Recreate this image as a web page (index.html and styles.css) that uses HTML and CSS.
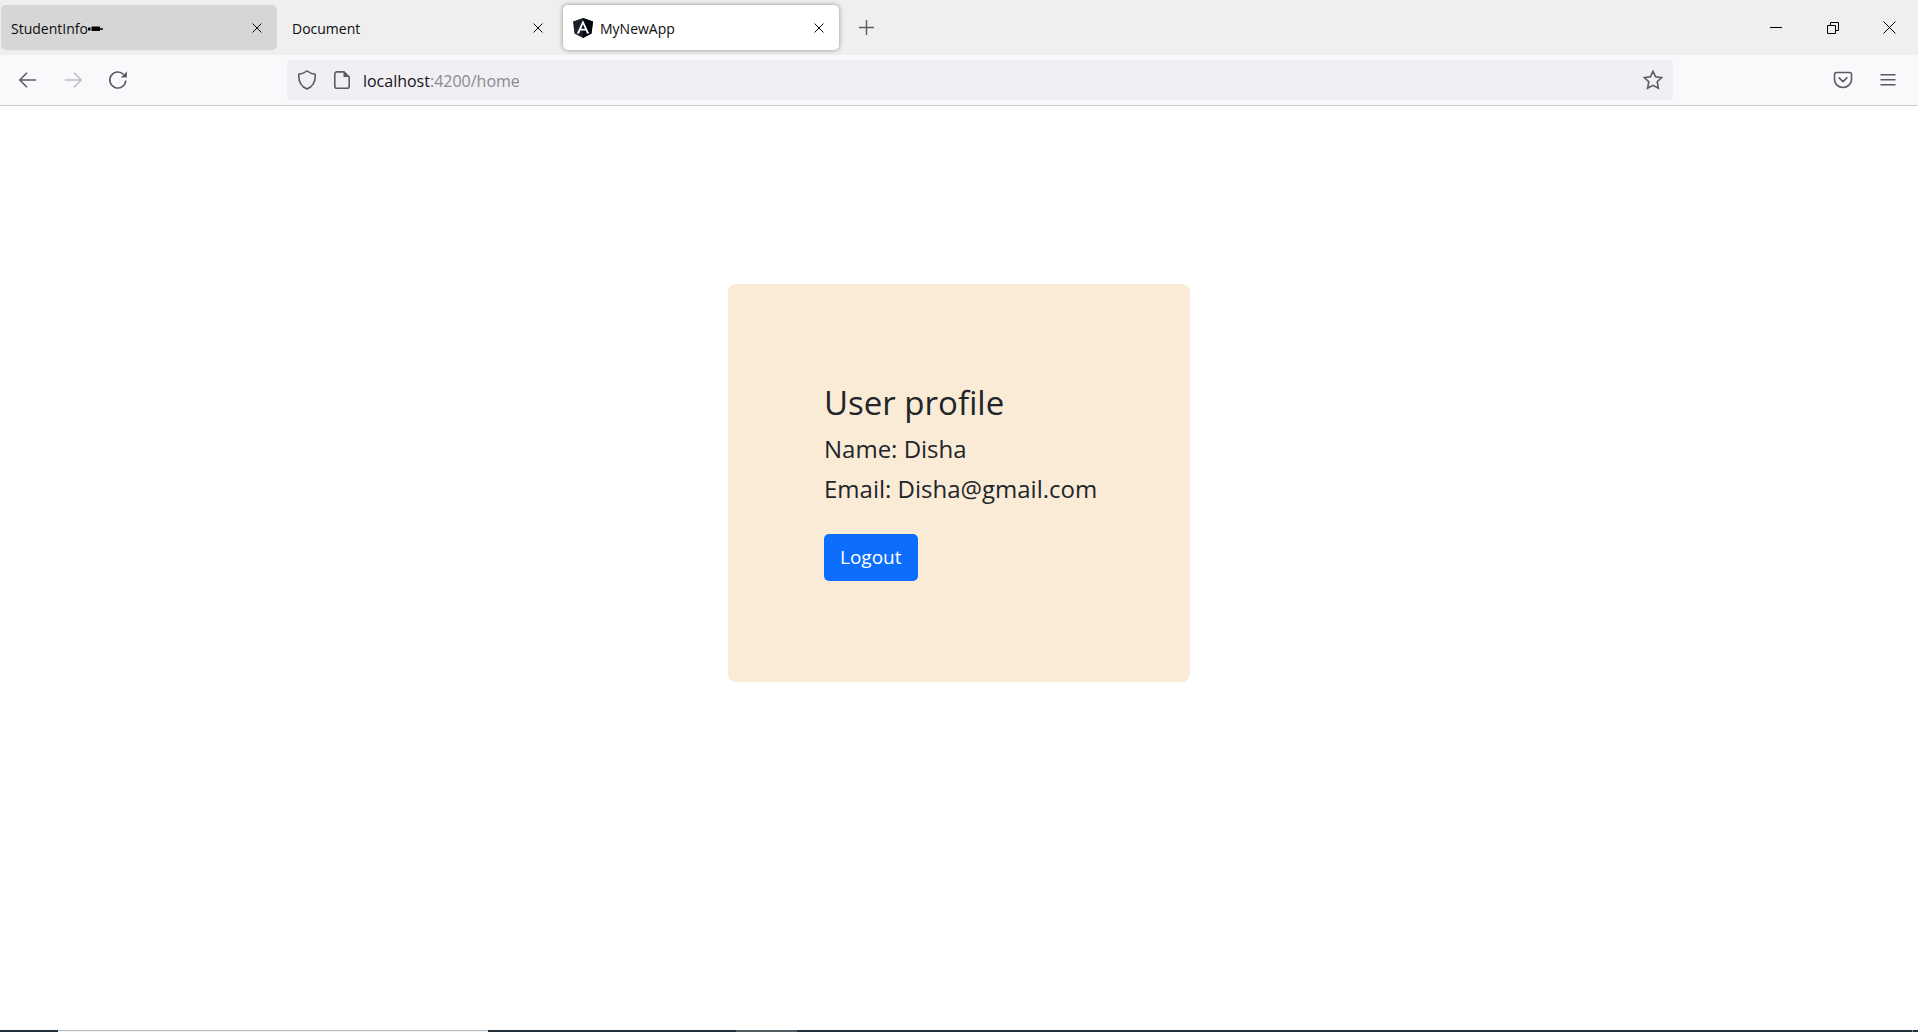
FILE: index.html
```html
<!DOCTYPE html>
<html lang="en">
<head>
<meta charset="utf-8">
<title>MyNewApp</title>
<link rel="stylesheet" href="styles.css">
</head>
<body>
<header class="browser">
  <div class="tab-strip">
    <div class="tab tab-hover">
      <span class="tab-title">StudentInfo</span>
      <svg class="mark" width="15" height="6" viewBox="0 0 15 6" aria-hidden="true"><path d="M3.500.600H12V5H3.500zM0 1.500H2.500V4.500H0zM12 2.200H15V3.700H12z"/></svg>
      <button class="tab-close" aria-label="Close StudentInfo"><svg width="10" height="10" viewBox="0 0 10 10"><path d="M.5.5l9 9M9.500.5l-9 9"/></svg></button>
    </div>
    <div class="tab">
      <span class="tab-title">Document</span>
      <button class="tab-close" aria-label="Close Document"><svg width="10" height="10" viewBox="0 0 10 10"><path d="M.5.5l9 9M9.500.5l-9 9"/></svg></button>
    </div>
    <div class="tab tab-active">
      <svg class="favicon" width="20" height="20" viewBox="0 0 20 20" aria-hidden="true"><path fill="#1b1f2b" d="M10 0l10 3.400-1.500 12L10 20l-8.500-4.600L0 3.400z"/><path fill="#03060f" d="M10 0l10 3.400-1.500 12L10 20z"/><path fill="#fff" fill-rule="evenodd" d="M10 2.200l6.200 13.400h-2.300l-1.200-3H7.300l-1.200 3H3.800zM10 6.300l-1.900 4.500h3.800z"/></svg>
      <span class="tab-title">MyNewApp</span>
      <button class="tab-close" aria-label="Close MyNewApp"><svg width="10" height="10" viewBox="0 0 10 10"><path d="M.5.5l9 9M9.500.5l-9 9"/></svg></button>
    </div>
    <button class="new-tab" aria-label="New tab"><svg width="15" height="15" viewBox="0 0 15 15"><path d="M7.500 0v15M0 7.500h15"/></svg></button>
    <div class="window-controls">
      <button aria-label="Minimize"><svg width="12" height="12" viewBox="0 0 12 12"><path d="M0 5.500h12"/></svg></button>
      <button aria-label="Restore"><svg width="12" height="12" viewBox="0 0 12 12"><path d="M.5 3.500h8v8h-8zM3.500 3V.5h8v8H9"/></svg></button>
      <button aria-label="Close window"><svg width="13" height="13" viewBox="0 0 13 13"><path d="M.5.5l12 12M12.500.5l-12 12"/></svg></button>
    </div>
  </div>
  <nav class="toolbar" aria-label="Navigation">
    <button class="tool" aria-label="Back"><svg width="20" height="20" viewBox="0 0 20 20"><path d="M18.200 10H2.200M9 2.800L1.900 10 9 17.200"/></svg></button>
    <button class="tool" aria-label="Forward" disabled><svg width="20" height="20" viewBox="0 0 20 20"><path d="M1.800 10h16M11 2.800l7.100 7.200-7.100 7.200"/></svg></button>
    <button class="tool" aria-label="Reload"><svg width="20" height="20" viewBox="0 0 20 20"><path d="M17.800 10.500A8 8 0 1 1 15.600 4.500"/><path class="solid" d="M18.900 1.400v6.200h-6.200z"/></svg></button>
    <div class="spacer"></div>
    <div class="address">
      <div class="site-icons">
        <svg width="20" height="20" viewBox="0 0 20 20" aria-hidden="true"><path d="M10 1c2.500 2 5 2.800 8.200 3.200C18.600 11 16 16.500 10 19 4 16.500 1.400 11 1.800 4.200 5 3.800 7.500 3 10 1z"/></svg>
        <svg width="20" height="20" viewBox="0 0 20 20" aria-hidden="true"><path d="M12 1.900H4.800a2 2 0 0 0-2 2v12.400a2 2 0 0 0 2 2h10.400a2 2 0 0 0 2-2V7z"/><path class="solid" d="M11.500 1.500V7h6z"/></svg>
      </div>
      <span class="url" role="textbox" aria-label="Address">localhost<span class="url-path">:4200/home</span></span>
      <button class="bookmark" aria-label="Bookmark this page"><svg width="20" height="20" viewBox="0 0 20 20"><path d="M10 1.300l2.600 5.500 6.100.8-4.500 4.100 1.200 6.500L10 15.300l-5.400 2.900 1.200-6.500L1.300 7.600l6.100-.8z"/></svg></button>
    </div>
    <div class="spacer"></div>
    <button class="tool" aria-label="Save to Pocket"><svg width="20" height="20" viewBox="0 0 20 20"><path d="M3.500 2.500h13a2 2 0 0 1 2 2V9.500a8.500 8 0 0 1-17 0V4.500a2 2 0 0 1 2-2zM5.600 7.400L10 11.600l4.400-4.200"/></svg></button>
    <button class="tool" aria-label="Open application menu"><svg width="16" height="16" viewBox="0 0 16 16"><path d="M.5 2.700h15M.5 7.700h15M.5 12.700h15"/></svg></button>
  </nav>
</header>
<main class="page">
  <section class="card">
    <h1>User profile</h1>
    <p>Name: Disha</p>
    <p>Email: Disha@gmail.com</p>
    <button class="logout">Logout</button>
  </section>
</main>
<footer class="taskbar"><div class="task-window"></div><div class="task-item"></div><div class="task-peek"></div></footer>
</body>
</html>
```
FILE: styles.css
```css
* { box-sizing: border-box; }

body {
  margin: 0;
  min-height: 100vh;
  display: flex;
  flex-direction: column;
  background: #fff;
  color: #212529;
  font-family: "Open Sans", "Noto Sans", sans-serif;
}

button {
  padding: 0;
  border: 0;
  background: none;
  color: inherit;
  font: inherit;
}

svg {
  display: block;
  flex: none;
  fill: none;
  stroke: currentColor;
}

.tab-strip {
  display: flex;
  align-items: center;
  gap: 5px;
  height: 55px;
  padding-left: 1px;
  background: #efefef;
}

.tab {
  display: flex;
  align-items: center;
  flex: 0 1 276px;
  height: 45px;
  padding: 0 10px;
  border-radius: 5px;
  color: #0c0c0d;
  font-size: 14px;
}

.tab-title { padding-top: 2px; }

.tab-hover { background: #d6d6d6; }

.tab-active {
  background: #fff;
  box-shadow: 0 0 5px rgba(0, 0, 0, .4);
}

.tab-close {
  display: grid;
  place-items: center;
  width: 20px;
  height: 20px;
  margin-left: auto;
}

.mark {
  margin-top: 2px;
  fill: #000;
  stroke: none;
}

.favicon {
  margin-right: 7px;
  stroke: none;
}

.new-tab {
  display: grid;
  place-items: center;
  width: 45px;
  height: 45px;
  color: #5b5b66;
}

.new-tab svg { stroke-width: 1.4; }

.window-controls {
  display: flex;
  height: 100%;
  margin-left: auto;
  color: #000;
}

.window-controls button {
  display: grid;
  place-items: center;
  width: 57px;
}

.toolbar {
  display: flex;
  align-items: center;
  height: 51px;
  padding: 0 8px 0 5px;
  border-bottom: 1px solid #ccccd1;
  background: #f9f9fb;
  color: #5b5b66;
}

.tool {
  display: grid;
  place-items: center;
  width: 45px;
  height: 40px;
}

.tool:disabled { color: #bdbdc2; }

.tool svg,
.address svg { stroke-width: 1.6; }

svg .solid {
  fill: currentColor;
  stroke: none;
}

.spacer { flex: 10; }

.address {
  display: flex;
  flex: 93;
  align-items: center;
  gap: 11px;
  height: 40px;
  padding: 0 10px;
  border-radius: 5px;
  background: #f0eff4;
}

.site-icons {
  display: flex;
  gap: 15px;
}

.url {
  padding-top: 2px;
  color: #15141a;
  font-size: 16px;
}

.url-path { color: #8a8a90; }

.bookmark { margin-left: auto; }

.page {
  flex: 1;
  padding: 178px 16px 0;
}

.card {
  max-width: 462px;
  margin: 0 auto;
  padding: 98px 96px 96px;
  border-radius: 8px;
  background: #faebd7;
  white-space: nowrap;
}

.card h1 {
  margin: 0 0 10px;
  font-size: 33px;
  font-weight: 400;
  line-height: 42px;
}

.card p {
  margin: 0 0 10px;
  font-size: 24px;
  line-height: 30px;
}

.logout {
  display: block;
  margin: 30px 0 5px;
  padding: 0 16px;
  border-radius: 5px;
  background: #0d6efd;
  color: #fff;
  font-size: 19px;
  line-height: 47px;
}

.taskbar {
  display: flex;
  height: 2px;
  background: #22313a;
}

.task-window {
  width: 430px;
  margin-left: 58px;
  border-top: 1px solid #bdbdbd;
  background: #f2f2f2;
}

.task-item {
  width: 61px;
  margin-left: 248px;
  background: #535e63;
}

.task-peek {
  width: 1px;
  margin: 0 5px 0 auto;
  background: #7d868b;
}
```
